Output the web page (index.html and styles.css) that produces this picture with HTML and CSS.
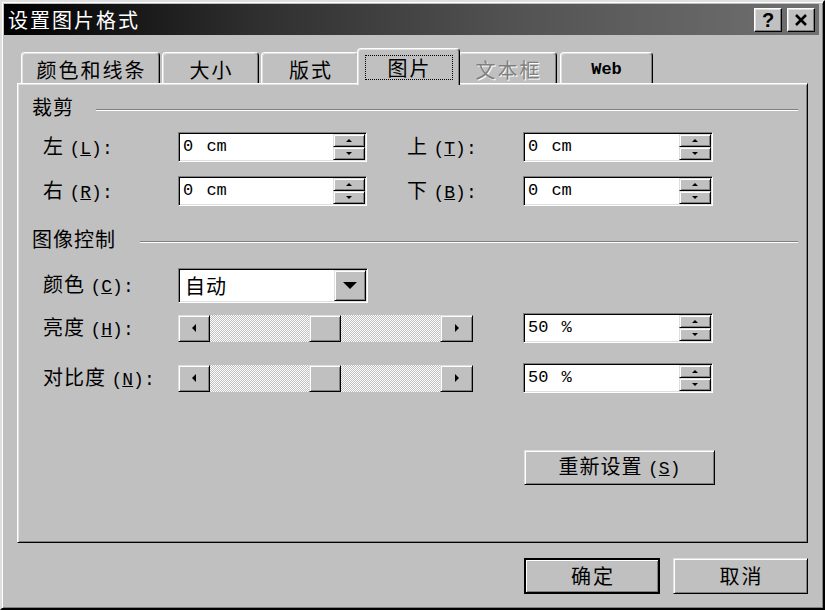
FILE: index.html
```html
<!DOCTYPE html>
<html lang="zh-CN">
<head>
<meta charset="utf-8">
<title>设置图片格式</title>
<link rel="stylesheet" href="styles.css">
</head>
<body>
<div class="window">
  <div class="titlebar">
    <span class="title">设置图片格式</span>
    <div class="tbtns">
      <span class="tbtn help">?</span>
      <span class="tbtn"><svg width="14" height="12" viewBox="0 0 14 12"><path d="M2 1 L12 11 M12 1 L2 11" stroke="#000" stroke-width="2.6" fill="none"/></svg></span>
    </div>
  </div>

  <div class="tabs">
    <div class="tab t1">颜色和线条</div>
    <div class="tab t2">大小</div>
    <div class="tab t3">版式</div>
    <div class="tab sel"><span class="focus">图片</span></div>
    <div class="tab dis">文本框</div>
    <div class="tab web">Web</div>
  </div>

  <div class="panel">
    <div class="group g1"><span class="gtext">裁剪</span><i class="sep"></i></div>

    <div class="row crop r1">
      <span class="lbl">左 <span class="k">(<u>L</u>):</span></span>
      <div class="field spin"><span class="val">0 cm</span><span class="sbtns"><span class="sb"><i class="up"></i></span><span class="sb"><i class="dn"></i></span></span></div>
      <span></span>
      <span class="lbl">上 <span class="k">(<u>T</u>):</span></span>
      <div class="field spin"><span class="val">0 cm</span><span class="sbtns"><span class="sb"><i class="up"></i></span><span class="sb"><i class="dn"></i></span></span></div>
    </div>

    <div class="row crop r2">
      <span class="lbl">右 <span class="k">(<u>R</u>):</span></span>
      <div class="field spin"><span class="val">0 cm</span><span class="sbtns"><span class="sb"><i class="up"></i></span><span class="sb"><i class="dn"></i></span></span></div>
      <span></span>
      <span class="lbl">下 <span class="k">(<u>B</u>):</span></span>
      <div class="field spin"><span class="val">0 cm</span><span class="sbtns"><span class="sb"><i class="up"></i></span><span class="sb"><i class="dn"></i></span></span></div>
    </div>

    <div class="group g2"><span class="gtext">图像控制</span><i class="sep"></i></div>

    <div class="row combo-row">
      <span class="lbl">颜色 <span class="k">(<u>C</u>):</span></span>
      <div class="field combo"><span class="cval">自动</span><span class="ddbtn"><i class="ddarrow"></i></span></div>
    </div>

    <div class="row sl r3">
      <span class="lbl">亮度 <span class="k">(<u>H</u>):</span></span>
      <div class="scroll">
        <span class="sbb"><i class="lt"></i></span>
        <span class="track"><span class="thumb"></span></span>
        <span class="sbb"><i class="rt"></i></span>
      </div>
      <span></span>
      <div class="field spin"><span class="val">50 %</span><span class="sbtns"><span class="sb"><i class="up"></i></span><span class="sb"><i class="dn"></i></span></span></div>
    </div>

    <div class="row sl r4">
      <span class="lbl">对比度 <span class="k">(<u>N</u>):</span></span>
      <div class="scroll">
        <span class="sbb"><i class="lt"></i></span>
        <span class="track"><span class="thumb"></span></span>
        <span class="sbb"><i class="rt"></i></span>
      </div>
      <span></span>
      <div class="field spin"><span class="val">50 %</span><span class="sbtns"><span class="sb"><i class="up"></i></span><span class="sb"><i class="dn"></i></span></span></div>
    </div>

    <div class="reset-row">
      <span class="btn reset"><span class="btxt">重新设置 <span class="k">(<u>S</u>)</span></span></span>
    </div>
  </div>

  <div class="footer">
    <span class="btn def">确定</span>
    <span class="btn cancel">取消</span>
  </div>
</div>
</body>
</html>
```

FILE: styles.css
```css
body {
  margin: 0;
  background: #c0c0c0;
}

.window {
  width: 825px;
  height: 610px;
  box-sizing: border-box;
  background: #c0c0c0;
  border: 2px solid;
  border-color: #dfdfdf #000 #000 #dfdfdf;
  box-shadow: inset 1px 1px #fff, inset -1px -1px #808080;
  padding: 2px;
  font-family: "Noto Sans CJK SC", "Noto Sans CJK TC", sans-serif;
  font-size: 20px;
  color: #000;
}

/* ---------- title bar ---------- */
.titlebar {
  height: 31px;
  margin-right: 2px;
  display: flex;
  align-items: center;
  padding-left: 4px;
  background: linear-gradient(to right, #000 0%, #2e2e2e 30%, #555 65%, #707070 100%);
}
.title {
  color: #fff;
  font-size: 20px;
  letter-spacing: 2px;
  line-height: 31px;
}
.tbtns {
  margin-left: auto;
  margin-right: 4px;
  display: flex;
  gap: 5px;
}
.tbtn {
  width: 28px;
  height: 24px;
  box-sizing: border-box;
  background: #c0c0c0;
  border: 1px solid;
  border-color: #fff #000 #000 #fff;
  box-shadow: inset -1px -1px #808080, inset 1px 1px #dfdfdf;
  display: flex;
  align-items: center;
  justify-content: center;
}
.help {
  font-family: "Liberation Sans", sans-serif;
  font-weight: bold;
  font-size: 20px;
  line-height: 22px;
}

/* ---------- tabs ---------- */
.tabs {
  display: flex;
  align-items: flex-end;
  height: 35px;
  margin: 13px 13px 0;
}
.tab {
  height: 31px;
  box-sizing: border-box;
  border: 1px solid;
  border-bottom: none;
  border-color: #fff #000 transparent #fff;
  border-radius: 4px 4px 0 0;
  box-shadow: inset -1px 0 #808080, inset 1px 1px #dfdfdf;
  display: flex;
  justify-content: center;
  align-items: flex-start;
  padding-top: 6px;
  line-height: 22px;
  letter-spacing: 2px;
  text-indent: 2px;
  background: #c0c0c0;
}
.t1 { width: 139px; margin-left: 4px; }
.t2 { width: 97px; margin-left: 2px; }
.t3 { width: 98px; margin-left: 2px; }
.sel {
  width: 103px;
  height: 37px;
  margin-left: -2px;
  margin-bottom: -2px;
  padding-top: 6px;
  position: relative;
  z-index: 1;
  text-indent: 0;
}
.focus {
  display: block;
  border: 1px dotted #000;
  line-height: 23px;
  padding: 0 20px 0 22px;
}
.dis {
  width: 99px;
  margin-left: -2px;
  color: #808080;
  text-shadow: 1px 1px #fff;
}
.web {
  width: 93px;
  margin-left: 3px;
  font-family: "Liberation Mono", monospace;
  font-weight: bold;
  font-size: 17px;
  letter-spacing: 0;
  text-indent: 0;
}

/* ---------- panel ---------- */
.panel {
  height: 460px;
  margin: 0 13px;
  box-sizing: border-box;
  border: 1px solid;
  border-color: #fff #000 #000 #fff;
  box-shadow: inset 1px 1px #dfdfdf, inset -1px -1px #808080;
  padding: 12px 9px 0 14px;
}

.group {
  display: flex;
  align-items: flex-start;
  height: 22px;
  line-height: 22px;
  letter-spacing: 1px;
}
.sep {
  flex: 1;
  height: 0;
  margin-left: 22px;
  margin-top: 13px;
  border-top: 1px solid #808080;
  border-bottom: 1px solid #fff;
}
.g2 { margin-top: 22px; }
.g2 .sep { margin-left: 24px; }

.row {
  display: grid;
  align-items: center;
  margin-left: 11px;
}
.crop {
  grid-template-columns: 135px 189px 40px 116px 190px;
  height: 30px;
}
.r1 { margin-top: 14px; }
.r2 { margin-top: 14px; }

.lbl {
  line-height: 22px;
  letter-spacing: 1px;
  white-space: nowrap;
}
.k {
  font-family: "Liberation Mono", monospace;
  font-size: 18px;
  letter-spacing: 0;
}

/* sunken fields */
.field {
  box-sizing: border-box;
  background: #fff;
  border: 1px solid;
  border-color: #808080 #fff #fff #808080;
  box-shadow: inset 1px 1px #000, inset -1px -1px #dfdfdf;
  padding: 1px;
  display: flex;
}
.spin { height: 30px; }
.val {
  flex: 1;
  padding-left: 3px;
  font-family: "Liberation Mono", monospace;
  font-size: 17px;
  line-height: 26px;
  word-spacing: 3px;
}
.sbtns {
  width: 32px;
  display: flex;
  flex-direction: column;
}
.sb, .sbb, .thumb, .ddbtn, .btn {
  box-sizing: border-box;
  background: #c0c0c0;
  border: 1px solid;
  border-color: #dfdfdf #000 #000 #dfdfdf;
  box-shadow: inset 1px 1px #fff, inset -1px -1px #808080;
}
.sb {
  height: 13px;
  display: flex;
  align-items: center;
  justify-content: center;
}
.up, .dn, .lt, .rt, .ddarrow {
  width: 0;
  height: 0;
  display: block;
}
.up {
  border-left: 3px solid transparent;
  border-right: 3px solid transparent;
  border-bottom: 3px solid #000;
}
.dn {
  border-left: 3px solid transparent;
  border-right: 3px solid transparent;
  border-top: 3px solid #000;
}

/* combo */
.combo-row {
  grid-template-columns: 135px 190px;
  height: 35px;
  margin-top: 18px;
}
.combo { height: 35px; }
.cval {
  flex: 1;
  padding-left: 5px;
  line-height: 31px;
  letter-spacing: 1px;
}
.ddbtn {
  width: 32px;
  display: flex;
  align-items: center;
  justify-content: center;
}
.ddarrow {
  border-left: 7px solid transparent;
  border-right: 7px solid transparent;
  border-top: 7px solid #000;
}

/* sliders */
.sl {
  grid-template-columns: 135px 295px 50px 190px;
  height: 30px;
}
.r3 { margin-top: 10px; }
.r4 { margin-top: 20px; }
.scroll {
  height: 27px;
  display: flex;
}
.sbb {
  width: 32px;
  display: flex;
  align-items: center;
  justify-content: center;
}
.sbb:last-child { width: 33px; }
.lt {
  border-top: 4px solid transparent;
  border-bottom: 4px solid transparent;
  border-right: 4px solid #000;
}
.rt {
  border-top: 4px solid transparent;
  border-bottom: 4px solid transparent;
  border-left: 4px solid #000;
}
.track {
  flex: 1;
  display: flex;
  background-color: #c0c0c0;
  background-image: repeating-conic-gradient(#fff 0 25%, #c0c0c0 0 50%);
  background-size: 2px 2px;
}
.thumb {
  width: 32px;
  height: 27px;
  margin-left: 99px;
}

/* buttons */
.btn {
  display: flex;
  align-items: center;
  justify-content: center;
  line-height: 22px;
  letter-spacing: 1px;
}
.btxt { white-space: nowrap; }
.reset-row {
  display: flex;
  margin: 57px 0 0 492px;
}
.reset {
  width: 191px;
  height: 35px;
}

.footer {
  display: flex;
  justify-content: flex-end;
  gap: 13px;
  margin: 15px 13px 0 0;
}
.footer .btn {
  height: 36px;
  width: 135px;
  letter-spacing: 2px;
  text-indent: 2px;
}
.footer .def {
  width: 136px;
  border: 2px solid #000;
  box-shadow: inset 1px 1px #fff, inset -1px -1px #808080;
}
```
